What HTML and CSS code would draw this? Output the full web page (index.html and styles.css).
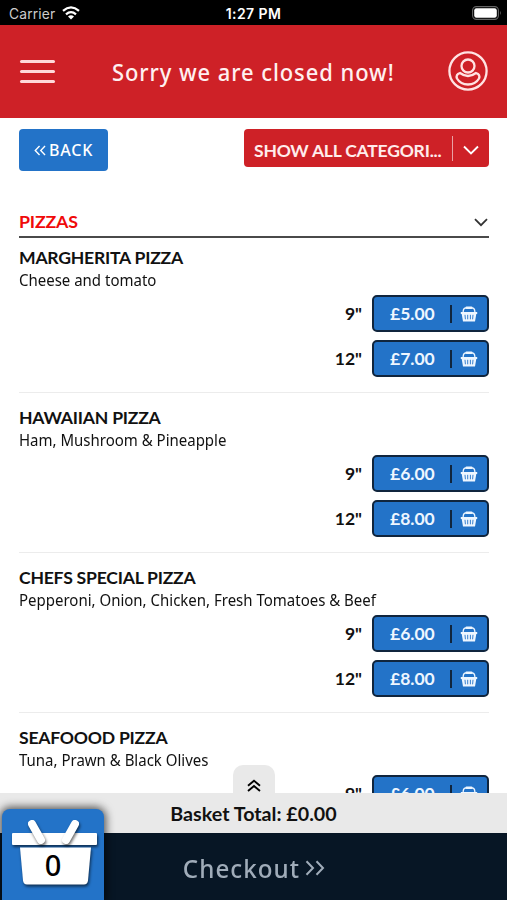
FILE: index.html
```html
<!DOCTYPE html>
<html lang="en">
<head>
<meta charset="utf-8">
<title>Pizza menu</title>
<link rel="stylesheet" href="styles.css">
</head>
<body>
<svg class="defs" aria-hidden="true">
  <symbol id="basket" viewBox="0 0 18 18">
    <path d="M3.200 7V6Q3.400 3 6 2.800h6Q14.600 3 14.800 6v1" fill="none" stroke="currentColor" stroke-width="1.300"/>
    <rect x="5.500" y="1.500" width="7" height="2.400" rx="1" fill="currentColor"/>
    <path d="M.8 7h16.400v2h-.9L15 16.500H3L1.700 9H.8z" fill="currentColor"/>
    <path d="M5 9.800l.4 4.500M7.700 9.800v4.500M10.400 9.800v4.500M13 9.800l-.4 4.500" stroke="#2373c8" stroke-width=".9"/>
  </symbol>
</svg>
<div class="app">
  <div class="status">
    <span class="carrier">Carrier</span>
    <svg class="wifi" viewBox="0 0 18 14"><g fill="none" stroke="#fff" stroke-width="2.3"><path d="M1 4.8Q9-2 17 4.8"/><path d="M4 8.3Q9 4 14 8.3"/></g><path d="M6 10.5Q9 8 12 10.5L9 13.6z" fill="#fff"/></svg>
    <span class="time">1:27 PM</span>
    <svg class="battery" viewBox="0 0 30 14"><rect x=".6" y=".6" width="25.8" height="12.8" rx="3.8" fill="none" stroke="#666" stroke-width="1.1"/><rect x="2.2" y="2.2" width="22.6" height="9.6" rx="2.2" fill="#fff"/><path d="M28 4.7q1.8 2.3 0 4.6z" fill="#666"/></svg>
  </div>
  <header class="top">
    <div class="burger"><i></i><i></i><i></i></div>
    <h1>Sorry we are closed now!</h1>
    <svg class="user" viewBox="0 0 40 40" fill="none" stroke="#ffe3e3" stroke-width="2.300"><circle cx="20" cy="20" r="18.6"/><circle cx="20" cy="15" r="6.500"/><path d="M12 22Q20 28 28 22Q32.500 23.500 31 27.500Q27.500 33.500 20 33.500T9 27.500Q7.500 23.500 12 22z"/></svg>
  </header>
  <main class="menu">
    <div class="tools">
      <div class="back"><svg viewBox="0 0 13 12"><path d="M6 1L1.3 6L6 11M12 1L7.3 6L12 11" fill="none" stroke="#fff" stroke-width="1.5"/></svg><span>BACK</span></div>
      <div class="select"><span>SHOW ALL CATEGORI...</span><b></b><svg viewBox="0 0 16 10"><path d="M1 1.5l7 7 7-7" fill="none" stroke="#fff" stroke-width="1.9"/></svg></div>
    </div>
    <div class="category"><h2>PIZZAS</h2><svg viewBox="0 0 14 9"><path d="M1 1.2l6 6 6-6" fill="none" stroke="#333" stroke-width="1.8"/></svg></div>
    <section class="item">
      <h3>MARGHERITA PIZZA</h3><p>Cheese and tomato</p>
      <div class="row"><span>9"</span><div class="price"><span>£5.00</span><i></i><svg><use href="#basket"/></svg></div></div>
      <div class="row"><span>12"</span><div class="price"><span>£7.00</span><i></i><svg><use href="#basket"/></svg></div></div>
    </section>
    <section class="item">
      <h3>HAWAIIAN PIZZA</h3><p>Ham, Mushroom &amp; Pineapple</p>
      <div class="row"><span>9"</span><div class="price"><span>£6.00</span><i></i><svg><use href="#basket"/></svg></div></div>
      <div class="row"><span>12"</span><div class="price"><span>£8.00</span><i></i><svg><use href="#basket"/></svg></div></div>
    </section>
    <section class="item">
      <h3>CHEFS SPECIAL PIZZA</h3><p>Pepperoni, Onion, Chicken, Fresh Tomatoes &amp; Beef</p>
      <div class="row"><span>9"</span><div class="price"><span>£6.00</span><i></i><svg><use href="#basket"/></svg></div></div>
      <div class="row"><span>12"</span><div class="price"><span>£8.00</span><i></i><svg><use href="#basket"/></svg></div></div>
    </section>
    <section class="item">
      <h3>SEAFOOOD PIZZA</h3><p>Tuna, Prawn &amp; Black Olives</p>
      <div class="row"><span>9"</span><div class="price"><span>£6.00</span><i></i><svg><use href="#basket"/></svg></div></div>
    </section>
  </main>
  <footer class="foot">
    <div class="tab"><svg viewBox="0 0 14 13"><path d="M1 6.7l6-5 6 5M1 12l6-5 6 5" fill="none" stroke="#000" stroke-width="1.9"/></svg></div>
    <div class="total">Basket Total: £0.00</div>
    <div class="checkout"><span>Checkout</span><svg viewBox="0 0 20 16"><path d="M1.5 1.2L8 8l-6.500 6.800M11.500 1.200L18 8l-6.500 6.800" fill="none" stroke="#a0acb9" stroke-width="2"/></svg></div>
    <div class="basket">
      <svg viewBox="0 0 102 91">
        <g class="shade" fill="#fff">
          <rect x="10" y="24" width="85" height="12" rx="1"/>
          <path d="M18 38.500h71l-3 33q-.5 4-4 4H25q-3.500 0-4-4z"/>
        </g>
        <g class="shade" stroke="#fff" stroke-width="8" stroke-linecap="round"><path d="M30 15L39 31"/><path d="M73 15L64 31"/></g>
      </svg>
      <span class="count">0</span>
    </div>
  </footer>
</div>
</body>
</html>
```
FILE: styles.css
```css
* { box-sizing: border-box; margin: 0; padding: 0; }
body { background: #fff; font-family: Lato, sans-serif; color: #111; overflow: hidden; }
svg { display: block; flex: none; }
.defs { display: none; }
.app { position: relative; width: 507px; height: 900px; overflow: hidden; display: flex; flex-direction: column; }
.status { height: 25px; flex: none; background: #000; color: #fff; font-family: Inter, sans-serif; display: grid; grid-template-columns: 53px 1fr 30px; align-items: center; padding: 3px 5px 0 9px; position: relative; }
.carrier { font-size: 13.8px; color: #ccc; letter-spacing: .15px; }
.wifi { width: 18px; height: 14px; margin-top: -2px; }
.time { position: absolute; left: 0; right: 0; top: 6px; text-align: center; font-size: 14px; line-height: 16px; font-weight: 600; letter-spacing: .4px; }
.battery { width: 30px; height: 14px; margin-top: -2px; }
.top { height: 93px; flex: none; background: #ce2127; display: flex; align-items: center; justify-content: space-between; padding: 0 19px 2px 20px; }
.burger { width: 35px; display: grid; gap: 7px; padding-top: 2px; }
.burger i { height: 3px; border-radius: 2px; background: #ffd9d9; }
.top h1 { font: 500 23.5px/30px "Noto Sans", sans-serif; letter-spacing: 1px; color: #fff0f0; padding-top: 2px; white-space: nowrap; transform: translateX(2px) scaleX(.934); }
.user { width: 40px; height: 40px; }
.menu { flex: 1; min-height: 0; overflow: hidden; padding: 11px 18px 0 19px; }
.tools { display: flex; justify-content: space-between; align-items: flex-start; height: 78px; }
.back { width: 89px; height: 42px; border-radius: 4px; background: #2373c8; color: #fff; display: flex; align-items: center; gap: 3px; padding-left: 15px; font: 500 16px/20px "Noto Sans", sans-serif; letter-spacing: .8px; }
.back svg { width: 12px; height: 11px; }
.select { width: 245px; height: 38px; border-radius: 4px; background: #ce2127; color: #ffecec; display: flex; align-items: center; padding: 4px 10px 0; font-size: 17.5px; font-weight: 700; letter-spacing: -.2px; }
.select span { width: 198px; white-space: nowrap; }
.select b { width: 1px; height: 25px; background: #e9a1a4; margin-top: -3px; }
.select svg { width: 16px; height: 10px; margin-left: 10px; }
.category { height: 31px; border-bottom: 2px solid #4a4a4a; display: flex; align-items: center; justify-content: space-between; padding-right: 1px; }
.category h2 { color: #f00a0a; font-size: 17.8px; line-height: 21px; letter-spacing: -.2px; margin-top: -1px; }
.category svg { width: 14px; height: 9px; margin-top: 2px; }
.item { height: 160px; padding-top: 14px; border-bottom: 1px solid #ececec; }
.category + .item { height: 155px; padding-top: 9px; }
.item h3 { font-size: 17.6px; line-height: 22px; height: 22px; font-weight: 700; letter-spacing: -.24px; white-space: nowrap; }
.item p { font: 400 15.8px/22px "Noto Sans", sans-serif; height: 26px; white-space: nowrap; width: max-content; transform-origin: 0 50%; transform: scaleX(.949); }
.row { display: flex; justify-content: flex-end; align-items: center; gap: 10px; height: 37px; margin-bottom: 8px; font-size: 17.5px; font-weight: 700; }
.price { width: 117px; height: 37px; background: #2373c8; border: 2px solid #10253d; border-radius: 5px; color: #eef6ff; display: flex; align-items: center; padding-left: 16px; }
.price span { width: 60px; white-space: nowrap; }
.price i { width: 2px; height: 18px; background: #10253d; }
.price svg { width: 18px; height: 18px; margin-left: 8px; }
.foot { height: 107px; flex: none; position: relative; }
.tab { position: absolute; left: 233px; top: -28px; width: 42px; height: 30px; background: #e9e9e9; border-radius: 10px 10px 0 0; display: flex; justify-content: center; padding-top: 14px; }
.tab svg { width: 14px; height: 13px; }
.total { height: 40px; background: #e9e9e9; text-align: center; font-size: 19.7px; line-height: 42px; font-weight: 700; }
.checkout { height: 67px; background: #071625; color: #a0acb9; display: flex; align-items: center; justify-content: center; gap: 6px; font: 500 26px/34px "Noto Sans", sans-serif; letter-spacing: 1.1px; padding-top: 2px; }
.checkout span { transform: scaleX(.93); transform-origin: 100% 50%; margin-left: -8px; }
.checkout svg { width: 20px; height: 16px; }
.basket { position: absolute; left: 2px; top: 16px; width: 102px; height: 91px; background: #2373c8; border-radius: 8px 8px 0 0; box-shadow: 0 0 9px 2px rgba(0,0,0,.65); }
.shade { filter: drop-shadow(1px 2px 1.500px rgba(0,0,0,.6)); }
.count { position: absolute; left: 0; width: 102px; top: 38px; text-align: center; font: 500 29px/36px "Noto Sans", sans-serif; color: #000; }
```
